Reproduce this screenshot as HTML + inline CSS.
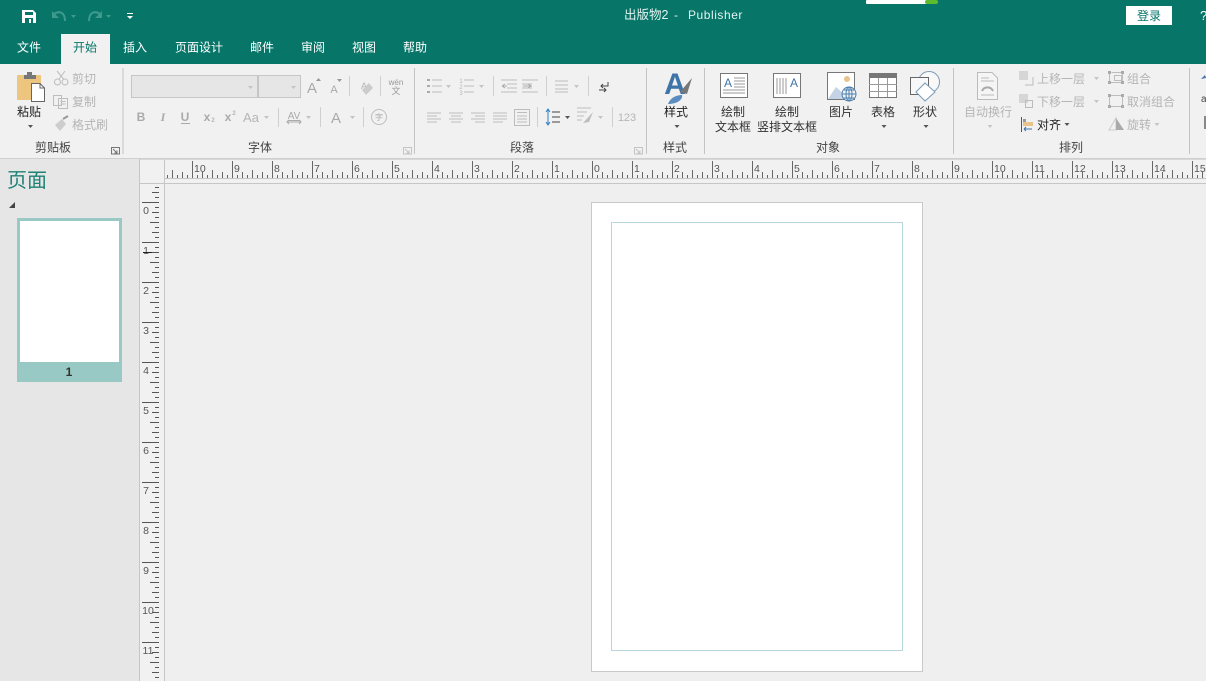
<!DOCTYPE html>
<html><head><meta charset="utf-8"><style>
html,body{margin:0;padding:0;background:#efefef;overflow:hidden}
svg{display:block}
text{font-family:"Liberation Sans","Noto Sans CJK SC",sans-serif;font-size:12px;fill:#333}
.m{text-anchor:middle}
.w{fill:#fff}
.d{fill:#b5b5b5}
.g{fill:#444;text-anchor:middle}
.r{font-size:10.5px;fill:#555}
.l{stroke:#bdbdbd;stroke-width:1;fill:none}
.k{stroke:#8a8a8a;stroke-width:1;fill:none}
.s{stroke:#cfcfcf;stroke-width:1}
.a{fill:#c4c4c4}
.b{fill:#555}
</style></head><body>
<svg width="1206" height="681" viewBox="0 0 1206 681" xmlns="http://www.w3.org/2000/svg">
<defs>
<pattern id="hr" x="192" y="160" width="40" height="24" patternUnits="userSpaceOnUse">
<path d="M.5 1V18M5.500 15V18M10.500 12V18M15.500 15V18M20.500 10V18M25.500 15V18M30.500 12V18M35.500 15V18" stroke="#666" fill="none"/>
</pattern>
<pattern id="vr" x="140" y="202" width="24" height="40" patternUnits="userSpaceOnUse">
<path d="M2 .5H19M15 5.500H19M12 10.500H19M15 15.500H19M10 20.500H19M15 25.500H19M12 30.500H19M15 35.500H19" stroke="#555" fill="none"/>
</pattern>
</defs>

<!-- backgrounds -->
<rect width="1206" height="681" fill="#efefef"/>
<rect width="1206" height="64" fill="#077568"/>
<rect y="64" width="1206" height="95" fill="#f1f1f1"/>
<rect y="158" width="1206" height="1" fill="#cfcfcf"/>
<rect x="61" y="34" width="49" height="30" fill="#f1f1f1"/>

<!-- title bar -->
<path d="M22 10H33L36 13V23H22Z" fill="#fff"/>
<rect x="25" y="12" width="8" height="3" fill="#077568"/>
<rect x="25" y="18" width="8" height="5" fill="#077568"/>
<rect x="29" y="19" width="2" height="4" fill="#fff"/>
<g fill="none" stroke="#3f9a8e" stroke-width="2">
<path d="M54 14C60 10 65 13 65 21"/>
<path d="M100 14C94 10 89 13 89 21"/>
</g>
<path d="M52 11V18H59ZM102 11V18H95Z" fill="#3f9a8e"/>
<path d="M71 15H76L73.500 18ZM106 15H111L108.500 18Z" fill="#3f9a8e"/>
<path d="M127 13H133V14H127ZM127 16H133L130 19Z" fill="#fff"/>
<text x="624" y="19" style="fill:#e3f3f0;font-size:12.500px">出版物2</text>
<text x="674" y="19" style="fill:#e3f3f0">-</text>
<text x="688" y="19" style="fill:#e3f3f0;letter-spacing:.55px">Publisher</text>
<rect x="866" y="0" width="62" height="4" fill="#fff" rx="1"/>
<rect x="925" y="0" width="13" height="4" rx="2" fill="#5fbb2e"/>
<rect x="1126" y="6" width="46" height="19" fill="#fff"/>
<text x="1149" y="20" class="m" style="fill:#077568">登录</text>
<text x="1200" y="20" class="w" style="font-size:13px">?</text>

<!-- tabs -->
<text x="29" y="51.500" class="m w">文件</text>
<text x="85" y="51.500" class="m" style="fill:#077568">开始</text>
<text x="135" y="51.500" class="m w">插入</text>
<text x="199" y="51.500" class="m w">页面设计</text>
<text x="262" y="51.500" class="m w">邮件</text>
<text x="313" y="51.500" class="m w">审阅</text>
<text x="364" y="51.500" class="m w">视图</text>
<text x="415" y="51.500" class="m w">帮助</text>

<!-- group separators -->
<g stroke="#c4c4c4"><path d="M123 68V154M414.500 68V154M646.500 68V154M704.500 68V154M953.500 68V154M1189.500 68V154"/></g>
<text x="53" y="151.500" class="g">剪贴板</text>
<text x="260" y="151.500" class="g">字体</text>
<text x="522" y="151.500" class="g">段落</text>
<text x="675" y="151.500" class="g">样式</text>
<text x="828" y="151.500" class="g">对象</text>
<text x="1071" y="151.500" class="g">排列</text>
<path d="M111.500 147.500H119.500V154H111.500ZM113 149L117 153M117 150.500V153H114.500" fill="none" stroke="#777"/>
<path d="M403.500 147.500H411.500V154H403.500ZM405 149L409 153M409 150.500V153H406.500" fill="none" stroke="#c4c4c4"/>
<path d="M634.500 147.500H642.500V154H634.500ZM636 149L640 153M640 150.500V153H637.500" fill="none" stroke="#c4c4c4"/>

<!-- clipboard -->
<rect x="17" y="75" width="24" height="25" rx="1" fill="#eec57f"/>
<path d="M24 79V75H27V72H32V75H36V79Z" fill="#777"/>
<path d="M31.500 83.500H40L44.500 88V101.500H31.500Z" fill="#fff" stroke="#666"/>
<path d="M40 83.500V88H44.500" fill="none" stroke="#666"/>
<text x="29" y="116" class="m" style="fill:#222">粘贴</text>
<path d="M28 125H33L30.500 128Z" class="b"/>
<g class="l" stroke-width="1.400"><circle cx="57.500" cy="82" r="3"/><circle cx="65" cy="82" r="3"/><path d="M59 79L65 71M63.500 79L57 71"/></g>
<text x="72" y="83" class="d">剪切</text>
<g class="l"><path d="M53.500 95.500H61.500V105.500H53.500ZM58.500 98.500H67.500V108.500H58.500ZM60.500 101.500H65.500M60.500 104H65.500"/></g>
<text x="72" y="106" class="d">复制</text>
<path d="M55 125L62 119L66 124L60 131Z" fill="#cdcdcd"/><path d="M63 119L68 116" stroke="#999" stroke-width="2"/>
<text x="72" y="129" class="d">格式刷</text>

<!-- font -->
<rect x="131.500" y="75.500" width="126" height="22" fill="#e6e6e6" stroke="#c6c6c6"/>
<rect x="258.500" y="75.500" width="42" height="22" fill="#e6e6e6" stroke="#c6c6c6"/>
<path d="M248 86H253L250.500 89ZM291 86H296L293.500 89Z" class="a"/>
<text x="312" y="93" class="m d" style="font-size:15px;fill:#aaa">A</text>
<path d="M316 81L318.500 78L321 81Z" fill="#999"/>
<text x="334" y="93" class="m d" style="font-size:11px;fill:#aaa">A</text>
<path d="M337 79L339.500 82L342 79Z" fill="#999"/>
<path d="M349.500 76V96M380.500 76V96M278.500 108V127M320.500 107V127M363.500 107V127" class="s"/>
<text x="364" y="89" class="m d" style="font-size:9px">A</text>
<path d="M362 90L369 83L373 88L366 95Z" fill="#ccc"/>
<text x="396" y="85" class="m d" style="font-size:8px;fill:#999">wén</text>
<text x="396" y="94" class="m d" style="font-size:9px;fill:#999">文</text>
<g style="font-weight:bold">
<text x="141" y="121" class="m d" style="font-weight:bold;fill:#aaa">B</text>
<text x="163" y="121" class="m d" style="font-style:italic;font-family:'Liberation Serif',serif;fill:#aaa">I</text>
<text x="185" y="121" class="m d" style="font-weight:bold;fill:#aaa">U</text>
<text x="207" y="121" class="m d" style="font-weight:bold;fill:#aaa">x</text>
<text x="213" y="122" class="m d" style="font-size:6px">2</text>
<text x="228" y="121" class="m d" style="font-weight:bold;fill:#aaa">x</text>
<text x="234" y="115" class="m d" style="font-size:6px">2</text>
</g>
<path d="M181 123.500H190" stroke="#aaa"/>
<text x="251" y="122" class="m d" style="font-size:13px">Aa</text>
<path d="M264 116H269L266.500 119ZM306 116H311L308.500 119ZM350 116H355L352.500 119Z" class="a"/>
<text x="294" y="119" class="m d" style="font-size:10px;text-decoration:underline;fill:#aaa">AV</text>
<path d="M287 122H301M289 120L287 122L289 124M299 120L301 122L299 124" fill="none" stroke="#aaa"/>
<text x="336" y="123" class="m d" style="font-size:15px;fill:#aaa">A</text>
<circle cx="379" cy="117" r="7.500" class="l"/>
<text x="379" y="120" class="m d" style="font-size:8px;fill:#aaa">字</text>

<!-- paragraph -->
<g class="l">
<path d="M432 80H442M432 86H442M432 92H442M464 80H474M464 86H474M464 92H474"/>
<path d="M501 80H517M507 84H517M507 88H517M501 92H517M522 80H538M522 84H532M522 88H532M522 92H538"/>
<path d="M555 81H568M555 85H568M555 89H568M555 92H568"/>
<path d="M427 113H441M427 116H437M427 119H441M427 122H437M449 113H463M451 116H461M449 119H463M451 122H461M471 113H485M475 116H485M471 119H485M475 122H485M493 113H507M493 116H507M493 119H507M493 122H503"/>
<path d="M514.500 109.500H529.500V125.500H514.500ZM517 116H527M517 119H527M517 122H527M517 112.500H527"/>
<path d="M577 108H591M577 112H587M577 116H584M577 120H582"/>
</g>
<g fill="#aaa"><rect x="427" y="79" width="3" height="2"/><rect x="427" y="85" width="3" height="2"/><rect x="427" y="91" width="3" height="2"/></g>
<text x="461" y="83" class="m d" style="font-size:6px">1</text><text x="461" y="89" class="m d" style="font-size:6px">2</text><text x="461" y="95" class="m d" style="font-size:6px">3</text>
<path d="M502 86H507M502 86L505 84M502 86L505 88M527 86H532" stroke="#aaa" fill="none"/>
<path d="M523 86H528M531 86L528 84M531 86L528 88" stroke="#aaa" fill="none"/>
<path d="M446 85H451L448.500 88ZM479 85H484L481.500 88ZM574 85H579L576.500 88ZM598 116H603L600.500 119Z" class="a"/>
<path d="M493.500 76V96M546.500 76V96M588.500 76V96M537.500 107V127M612.500 107V127" class="s"/>
<path d="M608 82V86H601M603 84L601 86L603 88M599 90H606M604 88L606 90L604 92" fill="none" stroke="#444"/>
<path d="M548 109V125" stroke="#2f7fc0"/><path d="M546 112L548 109L550 112M546 122L548 125L550 122" fill="none" stroke="#2f7fc0"/>
<path d="M552 112H560M552 117H560M552 122H560" stroke="#444"/>
<path d="M565 116H570L567.500 119Z" class="b"/>
<path d="M583 123L593 112L589 122Z" fill="#bdbdbd"/>
<text x="627" y="121" class="m d" style="font-size:11px">123</text>

<!-- styles -->
<text x="675" y="94" class="m" style="font-size:30px;font-weight:bold;fill:#3f74a8">A</text>
<path d="M680 92L692 78L687 94Z" fill="#777"/>
<path d="M668 104C670 98 676 95 682 95C683 99 678 104 668 104Z" fill="#5b8cc0"/>
<text x="676" y="116" class="m" style="fill:#222">样式</text>
<path d="M674.500 125H679.500L677 128Z" class="b"/>

<!-- objects -->
<rect x="720.500" y="73.500" width="27" height="24" fill="#fff" stroke="#777"/>
<text x="728" y="87" class="m" style="font-size:12px;fill:#3f74a8">A</text>
<path d="M734 78H745M734 81H745M734 84H745M734 87H745M723 90H745M723 93H745" stroke="#999"/>
<text x="733" y="116" class="m">绘制</text>
<text x="733" y="131" class="m">文本框</text>
<rect x="773.500" y="73.500" width="27" height="24" fill="#fff" stroke="#777"/>
<path d="M777 78V94M780 78V94M783 78V94M786 78V94" stroke="#999"/>
<text x="794" y="87" class="m" style="font-size:12px;fill:#3f74a8">A</text>
<text x="787" y="116" class="m">绘制</text>
<text x="787" y="131" class="m">竖排文本框</text>
<rect x="827.500" y="72.500" width="27" height="27" fill="#fff" stroke="#777"/>
<circle cx="847" cy="79" r="3" fill="#e8c48c"/>
<path d="M828 99L836 87L845 95V99Z" fill="#c4d3e6"/>
<circle cx="849" cy="94" r="7" fill="#f1f1f1" stroke="#4a7fb0"/>
<path d="M842 94H856M849 87V101M844 90H854M844 98H854" stroke="#4a7fb0" fill="none"/>
<ellipse cx="849" cy="94" rx="3" ry="7" fill="none" stroke="#4a7fb0"/>
<text x="841" y="116" class="m">图片</text>
<rect x="869.500" y="73.500" width="27" height="24" fill="#fff" stroke="#777"/>
<rect x="869" y="73" width="28" height="5" fill="#777"/>
<path d="M869 84.500H897M869 91.500H897M878.500 78V97M887.500 78V97" stroke="#999"/>
<text x="883" y="116" class="m">表格</text>
<path d="M881.500 125H886.500L884 128Z" class="b"/>
<circle cx="929" cy="82" r="10.500" fill="#f8f8f8" stroke="#7a9ab5"/>
<rect x="910.500" y="77.500" width="18" height="17" fill="#f8f8f8" stroke="#666"/>
<path d="M925 83L935 92L925 101L916 92Z" fill="#fff" stroke="#7a9ab5"/>
<text x="925" y="116" class="m">形状</text>
<path d="M923.500 125H928.500L926 128Z" class="b"/>

<!-- arrange -->
<path d="M977.500 72.500H992L997.500 78V99.500H977.500Z" fill="#f5f5f5" stroke="#bbb"/>
<path d="M981 78H989M981 81H994M981 95H994" stroke="#bbb"/>
<path d="M982 91A6 6 0 0 1 993 91" fill="none" stroke="#aaa" stroke-width="2"/>
<text x="988" y="116" class="m d">自动换行</text>
<path d="M987.500 125H992.500L990 128Z" class="a"/>
<rect x="1019" y="71" width="9" height="9" fill="#d6d6d6"/>
<path d="M1025 85H1033V77" fill="none" stroke="#bbb"/>
<text x="1037" y="83" class="d">上移一层</text>
<rect x="1019" y="94" width="9" height="9" fill="#d6d6d6"/>
<rect x="1025.500" y="100.500" width="7" height="7" fill="none" stroke="#bbb"/>
<text x="1037" y="106" class="d">下移一层</text>
<path d="M1094 77H1099L1096.500 80ZM1094 100H1099L1096.500 103Z" class="a"/>
<path d="M1021.500 117V132" stroke="#555"/>
<rect x="1023" y="119" width="3" height="3" fill="#999"/><rect x="1023" y="122" width="10" height="4" fill="#e8c48c"/>
<path d="M1024 129H1032M1024 129L1026 127M1024 129L1026 131" stroke="#3f74a8" fill="none"/>
<text x="1037" y="129" style="fill:#222">对齐</text>
<path d="M1064.500 123H1069.500L1067 126Z" class="b"/>
<g fill="#aaa"><rect x="1108" y="71" width="3" height="3"/><rect x="1121" y="71" width="3" height="3"/><rect x="1108" y="81" width="3" height="3"/><rect x="1121" y="81" width="3" height="3"/>
<rect x="1108" y="94" width="3" height="3"/><rect x="1121" y="94" width="3" height="3"/><rect x="1108" y="105" width="3" height="3"/><rect x="1121" y="105" width="3" height="3"/></g>
<path d="M1111.500 72.500H1121M1109.500 74V81M1122.500 74V81M1111 82.500H1121M1114.500 75.500H1121.500V80.500H1114.500Z" class="l"/>
<path d="M1111 95.500H1121M1109.500 97V105M1122.500 97V105M1111 106.500H1121" class="l"/>
<text x="1127" y="83" class="d">组合</text>
<text x="1127" y="106" class="d">取消组合</text>
<path d="M1109 130L1116 118V130Z" fill="none" stroke="#ccc"/><path d="M1116 118L1124 130H1116Z" fill="#aaa"/>
<text x="1127" y="129" class="d">旋转</text>
<path d="M1154.500 123H1159.500L1157 126Z" class="a"/>
<path d="M1201 79L1205 75L1206 78Z" fill="#3f74a8"/>
<text x="1201" y="102" style="font-size:10px;fill:#444">a</text>
<rect x="1204" y="116" width="2" height="13" fill="#888"/>

<!-- left pane -->
<rect y="159" width="140" height="522" fill="#e6e6e6"/>
<rect x="139" y="159" width="1" height="522" fill="#c6c6c6"/>
<text x="7" y="187" style="font-size:20px;fill:#1f8276">页面</text>
<path d="M15 202V208H9Z" fill="#444"/>
<rect x="17" y="218" width="105" height="164" fill="#99c9c4"/>
<rect x="20" y="221" width="99" height="141" fill="#fff"/>
<text x="69" y="376" class="m" style="font-weight:bold;fill:#333">1</text>

<!-- rulers -->
<rect x="140" y="159" width="1066" height="25" fill="#f1f1f1"/>
<rect x="140" y="184" width="24" height="497" fill="#f1f1f1"/>
<rect x="165" y="160" width="1041" height="24" fill="url(#hr)"/>
<rect x="140" y="184" width="24" height="497" fill="url(#vr)"/>
<rect x="165" y="178" width="1041" height="1" fill="#c4c4c4"/>
<rect x="140" y="183" width="1066" height="1" fill="#c6c6c6"/>
<rect x="164" y="160" width="1" height="521" fill="#c6c6c6"/>
<rect x="140" y="159" width="1066" height="1" fill="#d8d8d8"/>
<g class="r">
<text class="r" x="194" y="172">10</text><text class="r" x="234" y="172">9</text><text class="r" x="274" y="172">8</text><text class="r" x="314" y="172">7</text><text class="r" x="354" y="172">6</text><text class="r" x="394" y="172">5</text><text class="r" x="434" y="172">4</text><text class="r" x="474" y="172">3</text><text class="r" x="514" y="172">2</text><text class="r" x="554" y="172">1</text><text class="r" x="594" y="172">0</text><text class="r" x="634" y="172">1</text><text class="r" x="674" y="172">2</text><text class="r" x="714" y="172">3</text><text class="r" x="754" y="172">4</text><text class="r" x="794" y="172">5</text><text class="r" x="834" y="172">6</text><text class="r" x="874" y="172">7</text><text class="r" x="914" y="172">8</text><text class="r" x="954" y="172">9</text><text class="r" x="994" y="172">10</text><text class="r" x="1034" y="172">11</text><text class="r" x="1074" y="172">12</text><text class="r" x="1114" y="172">13</text><text class="r" x="1154" y="172">14</text><text class="r" x="1194" y="172">15</text>
<text class="r" x="146" y="214" text-anchor="middle">0</text><text class="r" x="146" y="254" text-anchor="middle">1</text><text class="r" x="146" y="294" text-anchor="middle">2</text><text class="r" x="146" y="334" text-anchor="middle">3</text><text class="r" x="146" y="374" text-anchor="middle">4</text><text class="r" x="146" y="414" text-anchor="middle">5</text><text class="r" x="146" y="454" text-anchor="middle">6</text><text class="r" x="146" y="494" text-anchor="middle">7</text><text class="r" x="146" y="534" text-anchor="middle">8</text><text class="r" x="146" y="574" text-anchor="middle">9</text><text class="r" x="148" y="614" text-anchor="middle">10</text><text class="r" x="148" y="654" text-anchor="middle">11</text>
</g>
<path d="M143 252.500H152" stroke="#222"/>

<!-- page -->
<rect x="591.500" y="202.500" width="331" height="469" fill="#fff" stroke="#c9c9c9"/>
<rect x="611.500" y="222.500" width="291" height="428" fill="none" stroke="#6fabb8" stroke-dasharray="1 1" shape-rendering="crispEdges"/>
</svg>
</body></html>
